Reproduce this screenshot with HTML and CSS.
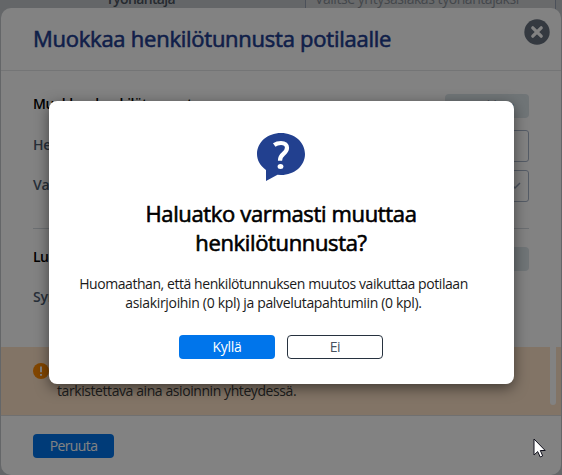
FILE: index.html
```html
<!DOCTYPE html>
<html lang="fi">
<head>
<meta charset="utf-8">
<title>Muokkaa henkilötunnusta</title>
<link rel="stylesheet" href="styles.css">
</head>
<body>
<div class="page">
  <div class="page-row"><b class="page-label">Työnantaja</b><div class="page-field">Valitse yritysasiakas työnantajaksi</div></div>
</div>
<section class="panel">
  <header class="panel-head">
    <h1>Muokkaa henkilötunnusta potilaalle</h1>
    <svg class="close" viewBox="0 0 26 26"><circle cx="13" cy="13" r="12.7"/><path d="M8.800 8.800l8.400 8.400M17.200 8.800l-8.400 8.400"/></svg>
  </header>
  <div class="panel-body">
    <div class="sec-head"><h2>Muokkaa henkilötunnusta</h2><span class="chip">Muokkaa</span></div>
    <div class="row first"><label>Hetu</label><div class="field"></div></div>
    <div class="row"><label>Va</label><div class="field"><svg class="chev" viewBox="0 0 12 8"><path d="M1 1l5 5 5-5"/></svg></div></div>
    <hr>
    <div class="sec-head"><h2>Luo</h2><span class="chip"></span></div>
    <div class="row last"><label>Synt.</label></div>
  </div>
  <div class="warning">
    <svg class="warn-icon" viewBox="0 0 16 16"><circle cx="8" cy="8" r="8"/><path d="M8 3.400v5.800M8 11v1.800"/></svg>
    <p>Henkilötunnus on<br>tarkistettava aina asioinnin yhteydessä.</p>
    <i class="scrollbar"></i>
  </div>
  <footer class="panel-foot"><button class="btn primary cancel">Peruuta</button></footer>
</section>
<div class="scrim"></div>
<section class="dialog">
  <svg class="question" viewBox="0 0 48 48"><path class="bubble" d="M24 0C37.500 0 48 9.300 48 21S37.500 42 24 42L20.500 41.800L9 48V37C3.200 32.700 0 27.300 0 21C0 9.300 10.500 0 24 0Z"/><path class="hook" d="M17.200 12C19 10.700 21.300 10 24 10C28 10 30 12.100 30 14.800C30 17.700 28.400 19.300 26.300 21C24 22.800 23 24.200 23 27.700"/><ellipse class="dot" cx="23.500" cy="33.600" rx="2.900" ry="2.500"/></svg>
  <h2>Haluatko varmasti muuttaa<br>henkilötunnusta?</h2>
  <p>Huomaathan, että henkilötunnuksen muutos vaikuttaa potilaan<br><span class="counts">asiakirjoihin (0 kpl) ja palvelutapahtumiin (0 kpl).</span></p>
  <div class="actions"><button class="btn primary">Kyllä</button><button class="btn outline">Ei</button></div>
</section>
<svg class="cursor" viewBox="0 0 13 20"><path d="M1 1V17L4.700 13.600L7.200 19L9.700 17.900L7.300 12.500H12.200Z"/></svg>
</body>
</html>
```
FILE: styles.css
```css
* { box-sizing: border-box; }
body {
  margin: 0;
  width: 562px;
  height: 475px;
  position: relative;
  overflow: hidden;
  font: 14px/19px "Open Sans", "Noto Sans", sans-serif;
  letter-spacing: -.45px;
  color: #000;
}
h1, h2, p { margin: 0; }
.page { height: 475px; background: #c4c8cc; overflow: hidden; }
.page-row { display: flex; margin-top: -12px; height: 24px; }
.page-label { width: 305px; padding-left: 106px; color: #4c545e; font-weight: 600; line-height: 22px; letter-spacing: -.65px; }
.page-field { width: 251px; border: solid #95a0b0; border-width: 0 1px; background: #ced0d2; color: #858c94; padding-left: 9px; line-height: 22px; letter-spacing: -.45px; }
.panel {
  position: absolute;
  left: 1px;
  top: 8px;
  width: 560px;
  height: 467px;
  background: #fff;
  border-radius: 10px;
  overflow: hidden;
  display: flex;
  flex-direction: column;
}
.panel-head {
  flex: none;
  height: 63px;
  border-bottom: 1px solid #e3e5e8;
  padding: 0 11px 0 32px;
  display: flex;
  justify-content: space-between;
}
.panel-head h1 { font-size: 22px; font-weight: 400; -webkit-text-stroke: .6px; line-height: 60px; letter-spacing: -.25px; color: #1f3d90; white-space: nowrap; }
.close { width: 26px; height: 26px; margin-top: 11px; }
.close circle { fill: #66717e; }
.close path { stroke: #fff; stroke-width: 3.3; stroke-linecap: round; }
.panel-body { flex: none; height: 276px; padding: 23px 32px 0; }
.sec-head { height: 24px; display: flex; justify-content: space-between; }
.sec-head h2 { font-size: 14px; font-weight: 600; line-height: 20px; letter-spacing: -.5px; }
.chip { width: 84px; height: 24px; border-radius: 4px; background: #dce5ea; color: #8b98a8; text-align: center; font-size: 13px; line-height: 23px; letter-spacing: -.1px; }
.row { display: flex; justify-content: space-between; height: 32px; margin-top: 8px; color: #4d5c70; font-weight: 600; line-height: 30px; letter-spacing: -.2px; }
.row.first { margin-top: 12px; }
.row.last { margin-top: 10px; line-height: 32px; }
.field { width: 200px; border: 1px solid #a8b5c8; border-radius: 3px; padding: 11px 7px; display: flex; justify-content: flex-end; }
.chev { width: 12px; height: 8px; fill: none; stroke: #94a3b8; stroke-width: 1.5; }
hr { border: 0; height: 1px; background: #d5dae0; margin: 26px 0 18px; }
.warning { flex: none; position: relative; height: 69px; background: #ffe4c9; border-bottom: 1px solid #dcdcdc; padding: 15px 32px; display: flex; gap: 8px; }
.warn-icon { width: 16px; height: 16px; margin-top: 1px; }
.warn-icon circle { fill: #ff8a00; }
.warn-icon path { stroke: #fff; stroke-width: 2; }
.warning p { color: #3a3a3a; line-height: 19px; white-space: nowrap; letter-spacing: -.42px; }
.scrollbar { position: absolute; right: 5px; top: 0; width: 6px; height: 58px; background: #fff; border-radius: 0 0 3px 3px; }
.panel-foot { padding: 18px 32px 0; }
.btn { width: 96px; height: 24px; padding: 0; border: 0; border-radius: 4px; font: inherit; line-height: 22px; letter-spacing: -.3px; }
.primary { background: #0075eb; color: #fff; }
.outline { background: #fff; color: #47515e; border: 1px solid #27323f; line-height: 20px; }
.cancel { width: 81px; display: block; letter-spacing: -.6px; }
.scrim { position: absolute; inset: 0; background: rgba(0, 0, 0, .49); }
.dialog {
  position: absolute;
  left: 49px;
  top: 101px;
  width: 465px;
  height: 283px;
  background: #fff;
  border-radius: 8px;
  box-shadow: 0 4px 14px rgba(0, 0, 0, .5);
  display: flex;
  flex-direction: column;
  align-items: center;
  text-align: center;
  padding: 32px 1px 0 0;
  white-space: nowrap;
}
.question { width: 48px; height: 48px; }
.bubble { fill: #22408f; }
.hook { fill: none; stroke: #fff; stroke-width: 4.2; }
.dot { fill: #fff; }
.dialog h2 { font-size: 22px; font-weight: 400; -webkit-text-stroke: .6px; line-height: 29px; margin-top: 18px; letter-spacing: -.35px; }
.dialog p { margin: 17px 15px 0 0; line-height: 19px; color: #1a1a1a; letter-spacing: -.43px; }
.counts { letter-spacing: -.33px; }
.actions { display: flex; gap: 12px; margin-top: 23px; }
.cursor { position: absolute; left: 533px; top: 438px; width: 13px; height: 20px; }
.cursor path { fill: #fff; stroke: #10101c; stroke-width: 1; }
```
